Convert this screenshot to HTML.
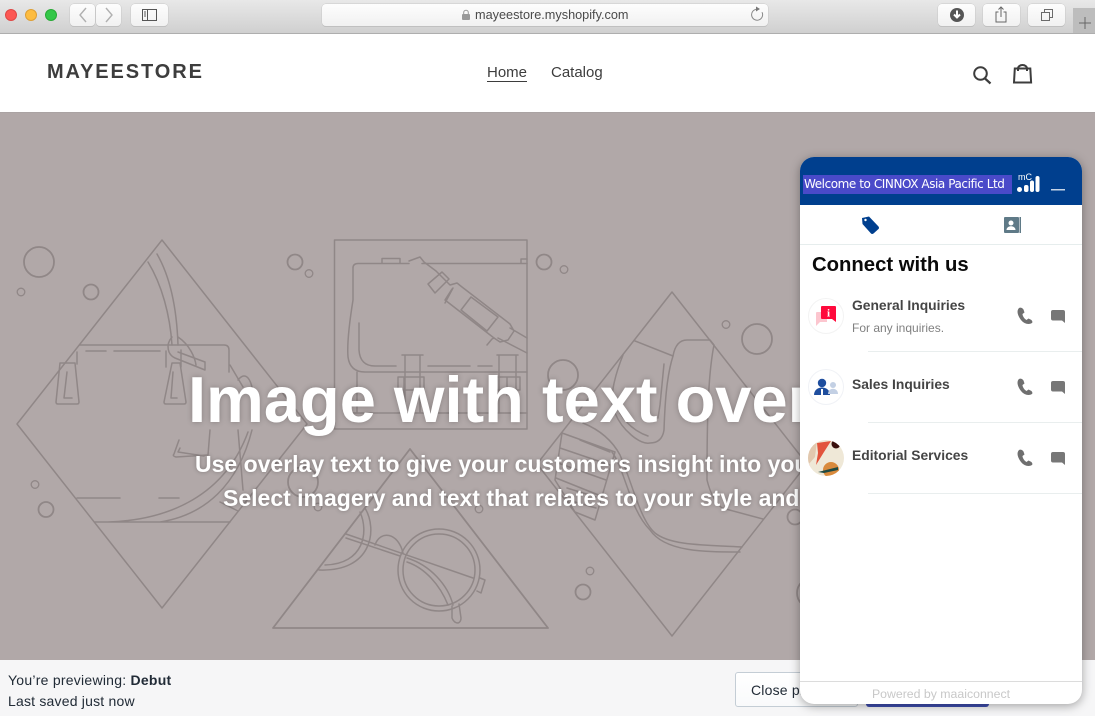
<!DOCTYPE html>
<html><head><meta charset="utf-8"><style>
*{box-sizing:border-box}
html,body{margin:0;padding:0;width:1095px;height:715px;overflow:hidden;background:#fff;font-family:"Liberation Sans",sans-serif}
.a{position:absolute;white-space:nowrap}
#bar{left:0;top:0;width:1095px;height:34px;background:linear-gradient(#e8e8e8,#d0d0d0);border-bottom:1px solid #aeaeae}
.dot{position:absolute;top:9px;width:12px;height:12px;border-radius:50%}
.btn{position:absolute;top:4px;height:22px;background:linear-gradient(#fdfdfd,#f1f1f1);border-radius:4px;box-shadow:0 0 0 .5px #c8c8c8,0 1px 0 #b8b8b8}
#hdr{left:0;top:34px;width:1095px;height:79px;background:#fff;border-bottom:1px solid #aaa3a3}
#hero{left:0;top:113px;width:1095px;height:547px;background:#b1a8a8}
.ht{color:#fff;font-weight:700;text-shadow:0 0 6px rgba(0,0,0,.25)}
#pv{left:0;top:659.500px;width:1095px;height:56px;background:#f6f6f7}
#w{left:800px;top:157px;width:282px;height:547px;background:#fff;border-radius:14px;box-shadow:0 2px 10px rgba(0,0,0,.35);overflow:hidden}
.ttl{font-size:13.850px;font-weight:700;color:#454545;left:52px}
.div{position:absolute;left:68px;right:0;height:1px;background:#e9eeee}
</style></head><body>
<div class="a" id="bar">
<div class="dot" style="left:5px;background:#fc5753;border:.5px solid #df4744"></div>
<div class="dot" style="left:25px;background:#fdbc40;border:.5px solid #de9f34"></div>
<div class="dot" style="left:45px;background:#33c748;border:.5px solid #27aa35"></div>
<div class="btn" style="left:70px;width:25px"></div><div class="btn" style="left:96px;width:25px"></div>
<div class="btn" style="left:131px;width:37px"></div>
<div class="btn" style="left:322px;width:446px"></div>
<div class="btn" style="left:938px;width:37px"></div><div class="btn" style="left:983px;width:37px"></div><div class="btn" style="left:1028px;width:37px"></div>
<div style="position:absolute;left:1073px;top:8px;width:22px;height:25px;background:#bdbdbd"></div>
<svg class="a" style="left:0;top:0" width="1095" height="34" fill="none" stroke="#6b6b6b">
<path d="M86 8l-6 7 6 7M106 8l6 7-6 7" stroke="#b0b0b0" stroke-width="1.4"/>
<rect x="142.500" y="9.500" width="14" height="11" stroke="#555"/><path d="M147.500 9.500v11M144 12h2M144 14h2M144 16h2" stroke="#555"/>
<path d="M757 9.200a5.500 5.500 0 1 0 5 3" stroke="#888"/><path d="M756 6.500l4 2.500-4 2.500z" fill="#777" stroke="none"/>
<rect x="462" y="14" width="8" height="6" fill="#999" stroke="none" rx="1"/><path d="M463.700 14v-1.500a2.300 2.300 0 0 1 4.600 0V14" stroke="#999"/>
<circle cx="957" cy="15" r="7" fill="#555" stroke="none"/><path d="M957 10.500v6M954 14.500l3 3 3-3" stroke="#fff" stroke-width="2"/>
<path d="M998.500 12h-2.500v10h10V12h-2.500M1001 17V7M998.500 9.500l2.500-2.500 2.500 2.500" stroke="#666"/>
<rect x="1041.500" y="12.500" width="8" height="8"/><path d="M1044.500 12.500v-3h8v8h-3"/>
<path d="M1085 17v12M1079 23h12" stroke="#666"/>
</svg>
<div class="a" style="left:475px;top:8px;font-size:12.700px;color:#4a4a4a">mayeestore.myshopify.com</div>
</div>
<div class="a" id="hdr">
<div class="a" style="left:47px;top:27px;font-size:20px;font-weight:700;letter-spacing:1.900px;color:#3d3d3d">MAYEESTORE</div>
<div class="a" style="left:487px;top:30px;font-size:15px;color:#3d3d3d;border-bottom:1px solid #3d3d3d;height:18px;line-height:18px">Home</div>
<div class="a" style="left:551px;top:30px;font-size:15px;color:#3d3d3d;line-height:18px">Catalog</div>
<svg class="a" style="left:960px;top:0" width="80" height="60" fill="none" stroke="#3d3d3d" stroke-width="2">
<circle cx="20.500" cy="39.500" r="6.300"/><path d="M25 44.500l5.500 5" stroke-width="2.200"/>
<path d="M54 48.500l.8-14h15.500l.8 14zM58 37v-2.500a4.500 3.500 0 0 1 9 0V37"/>
</svg>
</div>
<div class="a" id="hero"></div>
<svg class="a" style="left:0;top:0" width="1095" height="715" fill="none" stroke="#908787" stroke-width="1.500" stroke-linejoin="round" stroke-linecap="round">
<g>
<path d="M162 240L307 424 162 608 17 424Z"/>
<path d="M148 262C162 285 170 315 172 345M157 254C172 280 177 315 178 345"/>
<path d="M80 345H224Q229 345 229 350V372M86 351h20M114 351h46"/>
<path d="M77 352V364M75 363H60L56 402Q56 404 58 404H77Q79 404 79 402ZM67 372l-3 26h8"/>
<path d="M166 351V367M181 350V367M180 363H172L164 402Q164 404 166 404H184Q186 404 186 402ZM173 372l-2 26h6"/>
<path d="M172 337C165 345 168 355 175 358L205 370V362L178 352M178 337C190 345 195 358 196 365"/>
<path d="M230 365L243 387M238 380C246 370 252 380 253 395"/>
<path d="M179 440L174 454Q172 456 176 457L208 455 210 430M180 448L178 452 204 456M238 430L243 490"/>
<path d="M77 498h43M159 498h20M95 522H230M108 522C170 520 225 495 248 432M160 522C205 515 238 485 252 430M220 502L238 511"/>
</g>
<g>
<path d="M334.500 240H527V429H334.500Z"/>
<path d="M409 263.500H358Q353 263.500 353 268V300C349 325 347 345 348 357Q350 372 365 372H527M422 263.500H527M382 263V258.500H400V263M521 263V259H527"/>
<path d="M409 261L420 257 424 262 436 271 450 285 457 283 462 287 510 324 514 331 508 340 500 342 494 338 492 339 487 345M527 338L510 328M498 338L527 353"/>
<path d="M428 284L442 272 449 279 435 293ZM445 300L452 289M445 303L453 288M445 300L494 338"/>
<path d="M461 310L471 297 498 317 487 331ZM461 310L487 331"/>
<path d="M359 323V350Q360 366 375 366H396M428 366H470M478 366H492"/>
<path d="M357 372V413M353 413H527M402 355H423M405 355V413M420 355V413M398 377H424V390H398ZM404 377V395M497 355H518M499 355V413M516 355V413M497 377H520V390H497ZM507 377V395"/>
</g>
<path d="M410 449L548 628H273Z" stroke-width="1.800"/>
<path d="M365 508C378 530 372 572 319 570M360 512C369 532 364 564 325 565"/>
<circle cx="439" cy="570" r="41"/><circle cx="439" cy="570" r="36"/>
<path d="M346 534L473 578M346 538L400 556M375 545C380 530 398 532 403 553M407 558C430 565 448 585 453 605M407 562C425 568 440 585 448 605M452 606V618Q454 623 458 623 461 622 461 618L459 604M480 578L485 580 481 593 477 591"/>
<g>
<path d="M672 292L807 464 672 636 537 464Z"/>
<path d="M635 341L673 356C667 375 665 400 664 430Q662 443 650 443C640 445 622 430 615 413 608 400 615 375 623 355M664 364L660 405 658 418M620 413C630 430 645 435 648 436"/>
<path d="M673 356C675 345 680 340 687 340H710M714 345C708 375 707 420 707 480Q712 500 722 508L763 519M710 340L714 345"/>
<path d="M562 433L615 452 595 520 575 512 555 480ZM560 448L610 465M558 463L606 480M556 478L601 496M580 440L610 452M575 502L596 508M567 488L596 497"/>
<path d="M583 423C600 430 612 440 620 455 633 485 640 520 655 533 670 545 700 545 742 547M612 452C625 470 630 510 650 530 665 552 705 552 740 552"/>
</g>
<g stroke-width="1.800">
<circle cx="39" cy="262" r="15"/><circle cx="21" cy="292" r="3.800" stroke-width="1.300"/><circle cx="91" cy="292" r="7.500"/>
<circle cx="295" cy="262" r="7.500"/><circle cx="309" cy="273.500" r="3.800" stroke-width="1.300"/>
<circle cx="544" cy="262" r="7.500"/><circle cx="564" cy="269.500" r="3.800" stroke-width="1.300"/>
<circle cx="726" cy="324.500" r="3.800" stroke-width="1.300"/><circle cx="757" cy="339" r="15"/>
<circle cx="563" cy="375" r="15"/>
<circle cx="35" cy="484.500" r="3.800" stroke-width="1.300"/><circle cx="46" cy="509.500" r="7.500"/>
<circle cx="303" cy="482" r="15"/><circle cx="318" cy="507" r="3.800" stroke-width="1.300"/><circle cx="479" cy="509" r="3.800" stroke-width="1.300"/>
<circle cx="590" cy="571" r="3.800" stroke-width="1.300"/><circle cx="583" cy="592" r="7.500"/>
<circle cx="795" cy="517" r="7.500"/><circle cx="812" cy="593" r="15"/>
</g>
</svg>
<div class="a ht" style="left:188px;top:361px;font-size:65px;line-height:78px">Image with text overlay</div>
<div class="a ht" style="left:195px;top:447px;font-size:23px;line-height:34px;text-shadow:0 0 4px rgba(0,0,0,.3)">Use overlay text to give your customers insight into your brand.</div>
<div class="a ht" style="left:223px;top:481px;font-size:23px;line-height:34px;text-shadow:0 0 4px rgba(0,0,0,.3)">Select imagery and text that relates to your style and story.</div>
<div class="a" id="pv">
<div class="a" style="left:8px;top:12px;font-size:14px;color:#212b36;letter-spacing:.25px">You’re previewing: <b>Debut</b></div>
<div class="a" style="left:8px;top:33px;font-size:14px;color:#212b36;letter-spacing:.2px">Last saved just now</div>
<div class="a" style="left:735px;top:12.500px;width:123px;height:35px;background:linear-gradient(#fff,#f9fafb);border:1px solid #c4cdd5;border-radius:3px;font-size:14px;color:#212b36;padding:9px 15px;letter-spacing:.2px">Close preview</div>
<div class="a" style="left:866px;top:12.500px;width:123px;height:35px;background:#3f4eae;border-radius:3px"></div>
</div>
<div class="a" id="w">
<div class="a" style="left:0;top:0;width:282px;height:48px;background:#003f8e"></div>
<div class="a" style="left:3px;top:18px;width:209px;height:19px;background:#4a4ac9;color:#fff;font:12px/19px 'DejaVu Sans',sans-serif;letter-spacing:-.43px;padding-left:1px">Welcome to CINNOX Asia Pacific Ltd</div>
<div class="a" style="left:218px;top:15px;font-size:9px;line-height:10px;color:#fff">mC</div>
<svg class="a" style="left:0;top:0" width="282" height="125">
<circle cx="219.500" cy="32.500" r="2.500" fill="#fff"/><rect x="224" y="28" width="4.500" height="7" rx="2" fill="#fff"/><rect x="230" y="23.500" width="4" height="11.500" rx="2" fill="#fff"/><rect x="235.500" y="19" width="4" height="16" rx="2" fill="#fff"/>
<rect x="251" y="32" width="14" height="1.500" fill="#c6d4e6"/>
<path d="M62 61L69 59.500 78.500 69.500Q79.500 71 78.500 72L73.500 76.500Q72 77.500 71 76.500L62.500 67Z" fill="#003f8e"/><circle cx="65.500" cy="63" r="1.200" fill="#fff"/>
<rect x="204" y="60" width="15" height="16" rx="1" fill="#5f7a87"/><rect x="219.500" y="60" width="1.500" height="16" fill="#5f7a87"/><circle cx="211" cy="66" r="2.500" fill="#fff"/><path d="M206.500 73c0-5 9-5 9 0z" fill="#fff"/>
</svg>
<div class="a" style="left:0;top:87px;width:282px;height:1px;background:#e6eded"></div>
<div class="a" style="left:12px;top:96px;font-size:20.300px;font-weight:700;color:#0a0a0a;line-height:24px">Connect with us</div>

<div class="a ttl" style="top:140px">General Inquiries</div>
<div class="a" style="left:52px;top:164px;font-size:12px;color:#808080">For any inquiries.</div>
<div class="div" style="top:194px"></div>
<div class="a ttl" style="top:219px">Sales Inquiries</div>
<div class="div" style="top:265px"></div>
<div class="a ttl" style="top:290px">Editorial Services</div>
<div class="div" style="top:336px"></div>

<svg class="a" style="left:0;top:130px" width="282" height="230">
<defs>
<g id="ic">
<path d="M219 21C216 24 218 29 221 33 224 37 229 38 232 36 233 35 232 33 230.500 32.500L228.500 31.500 226.500 33C224.500 32 222.500 29 222.500 27L224.500 25.500 223.500 22.500C222.500 21 220.500 20 219 21Z" fill="#6f6f6f"/>
<path d="M253 23h10q2 0 2 2v11l-3-2.500h-9q-2 0-2-2v-6.500q0-2 2-2z" fill="#777"/>
</g>
<clipPath id="cc"><circle cx="26" cy="171" r="18"/></clipPath>
</defs>
<use href="#ic"/><use href="#ic" y="71"/><use href="#ic" y="142"/>
<circle cx="26" cy="29" r="17.500" fill="#fff" stroke="#f3f3f3"/>
<path d="M17 25h10v10h-7l-4 4V26q0-1 1-1z" fill="#fcc6cf"/>
<path d="M22 19h13q1 0 1 1v15l-4-3H22q-1 0-1-1V20q0-1 1-1z" fill="#ff0a3c"/>
<text x="28.500" y="29.500" font-family="Liberation Serif,serif" font-size="11" font-weight="700" fill="#fff" text-anchor="middle">i</text>
<circle cx="26" cy="100" r="17.500" fill="#fff" stroke="#f0f2f6"/>
<circle cx="22" cy="96" r="4.200" fill="#1f4e9e"/><path d="M14 108c0-10 16-10 16 0z" fill="#1f4e9e"/><path d="M21 102h2v6h-2z" fill="#fff"/>
<circle cx="33" cy="98" r="3" fill="#c3d0e4"/><path d="M28 107c0-7 10-7 10 0z" fill="#c3d0e4"/>
<g clip-path="url(#cc)">
<rect x="8" y="153" width="36" height="36" fill="#efe8d7"/>
<path d="M17 156L31 154 24 165 16 178 18 166Z" fill="#e2543c"/>
<path d="M8 160L17 154 15 170 8 178Z" fill="#e2c8ae"/>
<circle cx="36" cy="157" r="4.500" fill="#3a0f0c"/>
<path d="M8 175L14 188H8Z" fill="#d93a2b"/>
<circle cx="31" cy="183" r="8" fill="#d98a3c"/>
<path d="M18 185L38 180V183L24 186Z" fill="#1e4a42"/>
</g>
</svg>
<div class="a" style="left:0;top:524px;width:282px;height:1px;background:#dcdcdc"></div>
<div class="a" style="left:0;width:282px;top:530px;text-align:center;font-size:12.300px;color:#c8c8c8">Powered by maaiconnect</div>
</div>
</body></html>
